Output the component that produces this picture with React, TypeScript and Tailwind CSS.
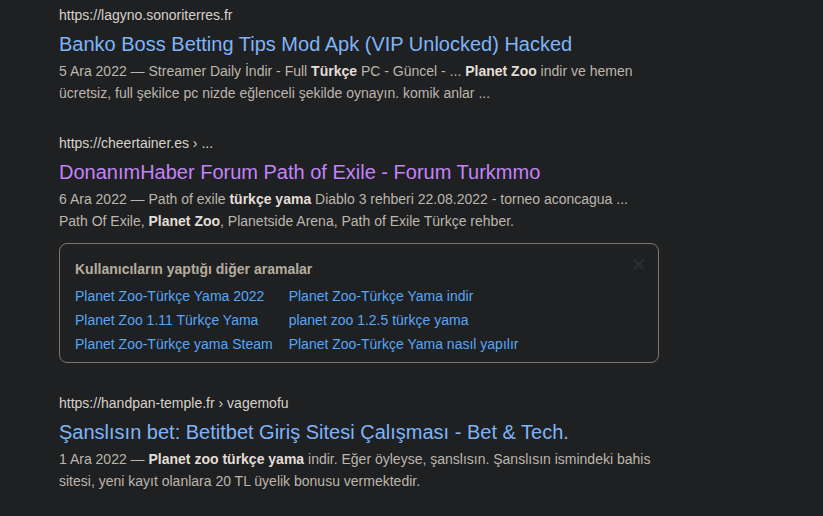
const results = [
  {
    url: <>https://lagyno.sonoriterres.fr</>,
    title: 'Banko Boss Betting Tips Mod Apk (VIP Unlocked) Hacked',
    visited: false,
    lines: [
      <>5 Ara 2022 — Streamer Daily İndir - Full <b>Türkçe</b> PC - Güncel - ... <b>Planet Zoo</b> indir ve hemen</>,
      <>ücretsiz, full şekilce pc nizde eğlenceli şekilde oynayın. komik anlar ...</>,
    ],
  },
  {
    url: <>https://cheertainer.es › ...</>,
    title: 'DonanımHaber Forum Path of Exile - Forum Turkmmo',
    visited: true,
    lines: [
      <>6 Ara 2022 — Path of exile <b>türkçe yama</b> Diablo 3 rehberi 22.08.2022 - torneo aconcagua ...</>,
      <>Path Of Exile, <b>Planet Zoo</b>, Planetside Arena, Path of Exile Türkçe rehber.</>,
    ],
  },
];

const related = [
  'Planet Zoo-Türkçe Yama 2022',
  'Planet Zoo-Türkçe Yama indir',
  'Planet Zoo 1.11 Türkçe Yama',
  'planet zoo 1.2.5 türkçe yama',
  'Planet Zoo-Türkçe yama Steam',
  'Planet Zoo-Türkçe Yama nasıl yapılır',
];

type ResultProps = {
  url: React.ReactNode;
  title: string;
  visited?: boolean;
  lines: React.ReactNode[];
};

const Result = ({ url, title, visited, lines }: ResultProps) => (
  <div>
    <div className="text-[14px] leading-[20px] text-[#d6d1c9]">{url}</div>
    <div
      className={`mt-[6px] text-[20px] leading-[26px] ${visited ? 'text-[#c384f7]' : 'text-[#7fb4f7]'}`}
    >
      {title}
    </div>
    <div className="mt-[3px] text-[14px] leading-[22px] text-[#bcb6ac] [&_b]:text-[#e2ded7] [&_b]:font-bold">
      {lines.map((l, i) => (
        <div key={i}>{l}</div>
      ))}
    </div>
  </div>
);

export default function App() {
  return (
    <div className="w-[823px] h-[516px] overflow-hidden bg-[#1f2022] font-['Liberation_Sans',Arial,sans-serif]">
      <div className="pl-[59px] pt-[5px] w-[658px] box-content">
        <Result {...results[0]} />
        <div className="mt-[29px]">
          <Result {...results[1]} />
        </div>

        <div className="relative mt-[11px] w-[600px] rounded-[8px] border border-[#7d776d] pl-[15px] pt-[15px] pb-[6px]">
          <div className="text-[14px] leading-[20px] font-bold text-[#b5ad9f]">
            Kullanıcıların yaptığı diğer aramalar
          </div>
          <span className="absolute right-[12px] top-[12px] text-[18px] leading-[18px] font-bold text-[#2c2d2f]">✕</span>
          <div className="mt-[5px] grid grid-cols-[auto_auto] justify-start gap-x-[16px] text-[14px] leading-[24px] text-[#55a7f6]">
            {related.map((r) => (
              <div key={r}>{r}</div>
            ))}
          </div>
        </div>

        <div className="mt-[30px]">
          <Result
            url={<>https://handpan-temple.fr › vagemofu</>}
            title="Şanslısın bet: Betitbet Giriş Sitesi Çalışması - Bet & Tech."
            lines={[
              <>1 Ara 2022 — <b>Planet zoo türkçe yama</b> indir. Eğer öyleyse, şanslısın. Şanslısın ismindeki bahis</>,
              <>sitesi, yeni kayıt olanlara 20 TL üyelik bonusu vermektedir.</>,
            ]}
          />
        </div>
      </div>
    </div>
  );
}
